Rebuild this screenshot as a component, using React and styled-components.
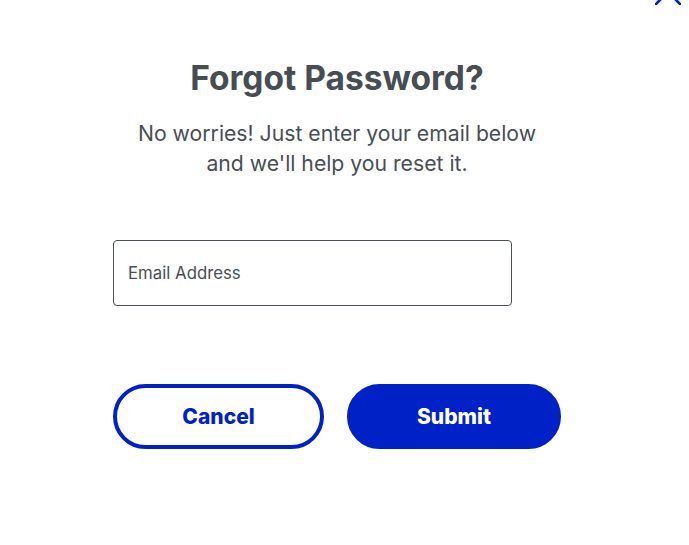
import React from 'react'
import styled, { createGlobalStyle } from 'styled-components'

const GlobalStyle = createGlobalStyle`
  html, body {
    margin: 0;
    padding: 0;
    background: #fff;
  }
  body {
    font-family: Inter, "Liberation Sans", sans-serif;
  }
`

const Modal = styled.div`
  position: relative;
  width: 689px;
  height: 545px;
  overflow: hidden;
  background: #fff;
  box-sizing: border-box;
  padding: 56px 0 0 113px;
`

const CloseButton = styled.button`
  position: absolute;
  top: -21px;
  right: 8px;
  width: 26px;
  height: 26px;
  padding: 0;
  border: none;
  background: transparent;
  cursor: pointer;
  svg {
    display: block;
  }
`

const Content = styled.div`
  width: 448px;
  display: flex;
  flex-direction: column;
`

const Title = styled.h1`
  margin: 0;
  text-align: center;
  font-size: 33.5px;
  line-height: 44px;
  font-weight: 700;
  color: #464d53;
`

const Desc = styled.p`
  margin: 18px 0 0;
  text-align: center;
  font-size: 21.2px;
  line-height: 30px;
  color: #474e55;
  white-space: nowrap;
`

const Field = styled.label`
  display: flex;
  align-items: center;
  margin-top: 62px;
  width: 399px;
  height: 66px;
  box-sizing: border-box;
  border: 1px solid #4a5058;
  border-radius: 4px;
  padding: 0 14px;
`

const Input = styled.input`
  flex: 1;
  border: none;
  outline: none;
  background: transparent;
  font-family: inherit;
  font-size: 16.8px;
  color: #464d53;
  padding: 0;
  &::placeholder {
    color: #474e55;
    opacity: 1;
  }
`

const Actions = styled.div`
  display: flex;
  gap: 23px;
  margin-top: 78px;
`

const Button = styled.button`
  height: 65px;
  width: ${p => p.$width}px;
  box-sizing: border-box;
  border-radius: 33px;
  border: 4px solid #0021c6;
  background: ${p => (p.$primary ? '#0021c6' : '#fff')};
  color: ${p => (p.$primary ? '#fff' : '#0021c6')};
  font-family: inherit;
  font-size: 21px;
  font-weight: 800;
  cursor: pointer;
`

const App = () => {
  return (
    <>
      <GlobalStyle />
      <Modal>
        <CloseButton aria-label="Close">
          <svg width="26" height="26" viewBox="0 0 26 26" fill="none">
            <path d="M1 1L25 25M25 1L1 25" stroke="#0021c6" strokeWidth="2.6" strokeLinecap="round" />
          </svg>
        </CloseButton>
        <Content>
          <Title>Forgot Password?</Title>
          <Desc>
            No worries! Just enter your email below
            <br />
            and we'll help you reset it.
          </Desc>
          <Field>
            <Input type="email" placeholder="Email Address" />
          </Field>
          <Actions>
            <Button type="button" $width={212}>Cancel</Button>
            <Button type="submit" $width={215} $primary>Submit</Button>
          </Actions>
        </Content>
      </Modal>
    </>
  )
}

export default App
